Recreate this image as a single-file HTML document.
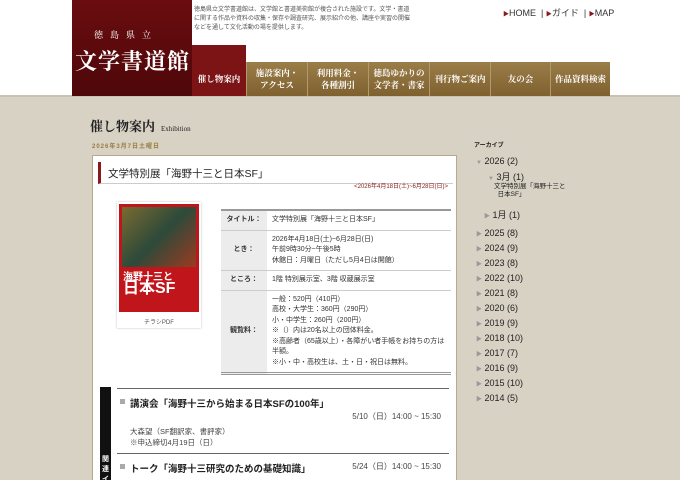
<!DOCTYPE html>
<html><head><meta charset="utf-8">
<style>
*{margin:0;padding:0;box-sizing:border-box}
html{width:680px;height:480px;overflow:hidden}
body{width:680px;height:480px;overflow:hidden;background:#d8d2c5;font-family:"Liberation Sans","Noto Sans CJK JP",sans-serif;color:#333;position:relative}
.hdr{position:absolute;left:0;top:0;width:680px;height:97px;background:#fff;border-bottom:2px solid #c9c2b2}
.logo{position:absolute;left:72px;top:0;width:120px;height:96px;background:linear-gradient(#6a0d10,#4e0709);color:#fff;font-family:"Noto Serif CJK SC",serif}
.logo .s{position:absolute;left:22px;top:28px;font-size:9px;letter-spacing:7px}
.logo .b{position:absolute;left:3px;top:45px;font-size:22px;letter-spacing:1px;font-weight:bold}
.desc{position:absolute;left:194px;top:6px;width:218px;font-size:6px;line-height:9px;color:#555}
.top{position:absolute;left:503px;top:6px;font-size:9px;color:#333}
.top b{color:#8a1a1a;font-size:6px}
.nav{position:absolute;top:62px;height:34px;color:#fff;font-size:8.5px;font-weight:bold;text-align:center;line-height:12px;display:flex;align-items:center;justify-content:center;font-family:"Noto Serif CJK SC",serif;background:linear-gradient(#9b7d48,#7f6130);border-left:1px solid #b09a6c}
.nav.a{background:#7c1416;top:45px;height:51px;padding-top:17px;border:0}
.ttl{position:absolute;left:90px;top:116px;font-size:13px;font-weight:bold;color:#222;font-family:"Noto Serif CJK SC",serif}
.ttl small{font-size:7px;font-weight:normal;margin-left:6px;font-family:"Liberation Serif",serif}
.date{position:absolute;left:92px;top:141px;font-size:6px;color:#9a7a3d;font-weight:bold;letter-spacing:1px}
.box{position:absolute;left:92px;top:155px;width:365px;height:325px;background:#fff;border:1px solid #b8a98a;border-bottom:0;overflow:hidden}
.h2{position:absolute;left:5px;top:6px;width:355px;height:22px;border-left:3px solid #8a1a1a;border-bottom:1px solid #ccc;font-size:10.5px;padding:4px 0 0 7px;color:#222}
.per{position:absolute;right:8px;top:25px;font-size:6px;color:#8a1a1a}
.fly{position:absolute;left:24px;top:46px;width:84px;height:126px;background:#fff;box-shadow:0 0 2px #bbb}
.fly .im{position:absolute;left:2px;top:2px;width:80px;height:108px;background:#c0161b}
.fly .im i{position:absolute;left:3px;top:3px;width:74px;height:60px;background:linear-gradient(135deg,#7a6a30,#2d4a3a 50%,#9b3b20)}
.fly .im b{position:absolute;left:4px;top:68px;color:#fff;font-size:10px;line-height:11px}
.fly .im b span{font-size:16px}
.fly p{position:absolute;top:115px;width:100%;text-align:center;font-size:6px;color:#555}
table{position:absolute;left:128px;top:53px;width:230px;border-collapse:collapse;border-top:2px solid #999;border-bottom:3px double #999;font-size:7px}
td{border-bottom:1px solid #ccc;padding:4px 5px;line-height:10.5px;vertical-align:middle}
td.k{width:46px;background:#ececec;font-weight:bold;text-align:center;color:#333;white-space:nowrap;padding:4px 3px}
.side{position:absolute;left:7px;top:231px;width:11px;height:110px;background:#111;color:#fff;font-size:7px;font-weight:bold;text-align:center;padding-top:68px;line-height:10px}
.ev{position:absolute;left:24px;width:332px;border-top:1px solid #666;font-size:7px;color:#444}
.ev h3{font-size:9.5px;margin:7px 0 0 13px;color:#222;position:relative}
.ev h3:before{content:"";position:absolute;left:-10px;top:3px;width:5px;height:5px;background:#aaa}
.ev .t{position:absolute;right:8px;top:22px;font-size:8px}
.ev p{margin:16px 0 0 13px;line-height:11px;font-size:7.5px}
.arc{position:absolute;left:474px;top:140px;font-size:9px;color:#222}
.arc div{position:absolute;white-space:nowrap}
.arc .g{color:#999;font-size:6px}
</style></head><body>
<div class="hdr">
<div class="logo"><div class="s">徳島県立</div><div class="b">文学書道館</div></div>
<div class="desc">徳島県立文学書道館は、文学館と書道美術館が複合された施設です。文学・書道に関する作品や資料の収集・保存や調査研究、展示紹介の他、講座や実習の開催などを通して文化活動の場を提供します。</div>
<div class="top"><b>▶</b>HOME &nbsp;|&nbsp;<b>▶</b>ガイド &nbsp;|&nbsp;<b>▶</b>MAP</div>
</div>
<div class="nav a" style="left:192px;width:54px">催し物案内</div>
<div class="nav" style="left:246px;width:61px">施設案内・<br>アクセス</div>
<div class="nav" style="left:307px;width:61px">利用料金・<br>各種割引</div>
<div class="nav" style="left:368px;width:61px">徳島ゆかりの<br>文学者・書家</div>
<div class="nav" style="left:429px;width:61px">刊行物ご案内</div>
<div class="nav" style="left:490px;width:60px">友の会</div>
<div class="nav" style="left:550px;width:60px">作品資料検索</div>

<div class="ttl">催し物案内<small>Exhibition</small></div>
<div class="date">2026年3月7日土曜日</div>
<div class="box">
<div class="h2">文学特別展「海野十三と日本SF」</div>
<div class="per">&lt;2026年4月18日(土)~6月28日(日)&gt;</div>
<div class="fly"><div class="im"><i></i><b>海野十三と<br><span>日本SF</span></b></div><p>チラシPDF</p></div>
<table>
<tr><td class="k">タイトル：</td><td>文学特別展「海野十三と日本SF」</td></tr>
<tr><td class="k">とき：</td><td>2026年4月18日(土)~6月28日(日)<br>午前9時30分~午後5時<br>休館日：月曜日（ただし5月4日は開館）</td></tr>
<tr><td class="k">ところ：</td><td>1階 特別展示室、3階 収蔵展示室</td></tr>
<tr><td class="k">観覧料：</td><td>一般：520円（410円）<br>高校・大学生：360円（290円）<br>小・中学生：260円（200円）<br>※（）内は20名以上の団体料金。<br>※高齢者（65歳以上）・各障がい者手帳をお持ちの方は半額。<br>※小・中・高校生は、土・日・祝日は無料。</td></tr>
</table>
<div class="side">関<br>連<br>イ</div>
<div class="ev" style="top:232px;height:65px"><h3>講演会「海野十三から始まる日本SFの100年」</h3><div class="t">5/10（日）14:00 ~ 15:30</div><p>大森望（SF翻訳家、書評家）<br>※申込締切4月19日（日）</p></div>
<div class="ev" style="top:297px"><h3>トーク「海野十三研究のための基礎知識」</h3><div class="t" style="top:7px">5/24（日）14:00 ~ 15:30</div></div>
</div>

<div class="arc">
<div style="top:0;left:0;font-size:6px;font-weight:bold">アーカイブ</div>
<div style="top:16px;left:2px"><span class="g">▼</span> 2026 (2)</div>
<div style="top:30px;left:14px"><span class="g">▼</span> 3月 (1)</div>
<div style="top:43px;left:20px;font-size:6.5px;line-height:8px;white-space:normal;width:80px">文学特別展「海野十三と<br>&nbsp;&nbsp;日本SF」</div>
<div style="top:68px;left:10px"><span class="g">▶</span> 1月 (1)</div>
<div style="top:88px;left:2px"><span class="g">▶</span> 2025 (8)</div>
<div style="top:103px;left:2px"><span class="g">▶</span> 2024 (9)</div>
<div style="top:118px;left:2px"><span class="g">▶</span> 2023 (8)</div>
<div style="top:133px;left:2px"><span class="g">▶</span> 2022 (10)</div>
<div style="top:148px;left:2px"><span class="g">▶</span> 2021 (8)</div>
<div style="top:163px;left:2px"><span class="g">▶</span> 2020 (6)</div>
<div style="top:178px;left:2px"><span class="g">▶</span> 2019 (9)</div>
<div style="top:193px;left:2px"><span class="g">▶</span> 2018 (10)</div>
<div style="top:208px;left:2px"><span class="g">▶</span> 2017 (7)</div>
<div style="top:223px;left:2px"><span class="g">▶</span> 2016 (9)</div>
<div style="top:238px;left:2px"><span class="g">▶</span> 2015 (10)</div>
<div style="top:253px;left:2px"><span class="g">▶</span> 2014 (5)</div>
</div>
</body></html>
